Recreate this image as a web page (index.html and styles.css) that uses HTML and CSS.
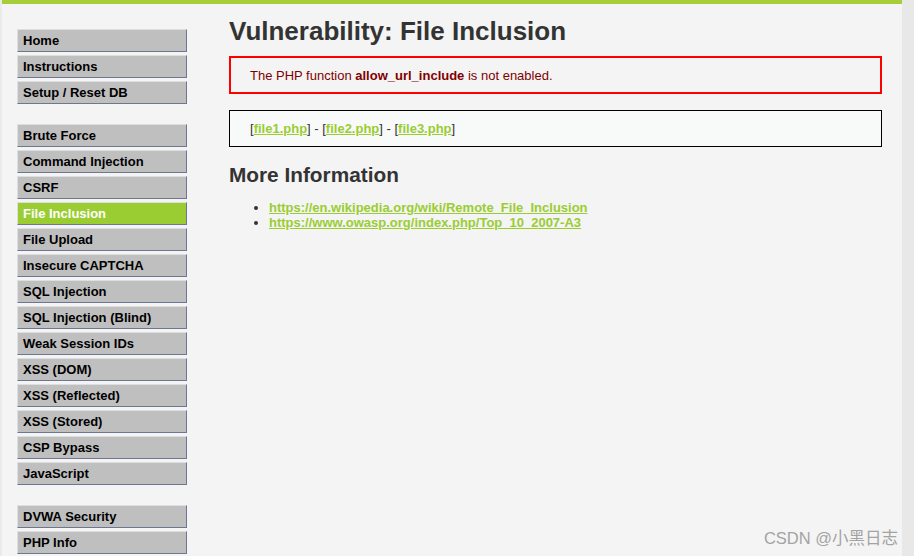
FILE: index.html
```html
<!DOCTYPE html>
<html lang="en">
<head>
<meta charset="utf-8">
<title>Vulnerability: File Inclusion</title>
<link rel="stylesheet" href="styles.css">
</head>
<body>
<div class="page">
  <div class="topbar"></div>
  <div class="layout">
    <nav class="menu">
      <ul class="group">
        <li><a href="#">Home</a></li>
        <li><a href="#">Instructions</a></li>
        <li><a href="#">Setup / Reset DB</a></li>
      </ul>
      <ul class="group">
        <li><a href="#">Brute Force</a></li>
        <li><a href="#">Command Injection</a></li>
        <li><a href="#">CSRF</a></li>
        <li><a href="#" class="selected">File Inclusion</a></li>
        <li><a href="#">File Upload</a></li>
        <li><a href="#">Insecure CAPTCHA</a></li>
        <li><a href="#">SQL Injection</a></li>
        <li><a href="#">SQL Injection (Blind)</a></li>
        <li><a href="#">Weak Session IDs</a></li>
        <li><a href="#">XSS (DOM)</a></li>
        <li><a href="#">XSS (Reflected)</a></li>
        <li><a href="#">XSS (Stored)</a></li>
        <li><a href="#">CSP Bypass</a></li>
        <li><a href="#">JavaScript</a></li>
      </ul>
      <ul class="group">
        <li><a href="#">DVWA Security</a></li>
        <li><a href="#">PHP Info</a></li>
      </ul>
    </nav>
    <main class="body">
      <h1 class="title">Vulnerability: File Inclusion</h1>
      <div class="warning">The PHP function <b>allow_url_include</b> is not enabled.</div>
      <div class="code-area">[<a href="#">file1.php</a>] - [<a href="#">file2.php</a>] - [<a href="#">file3.php</a>]</div>
      <h2 class="subtitle">More Information</h2>
      <ul class="links">
        <li><a href="#">https://en.wikipedia.org/wiki/Remote_File_Inclusion</a></li>
        <li><a href="#">https://www.owasp.org/index.php/Top_10_2007-A3</a></li>
      </ul>
    </main>
  </div>
</div>
<div class="watermark">CSDN @小黑日志</div>
</body>
</html>
```
FILE: styles.css
```css
html, body {
  margin: 0;
  padding: 0;
  height: 100%;
}
body {
  background: #e8e8e8;
  font-family: "Liberation Sans", Arial, sans-serif;
  font-size: 13px;
  color: #333;
  overflow: hidden;
}
.page {
  width: 902px;
  height: 556px;
  background: #f4f4f4;
  border-left: 2px solid #ebebeb;
  box-sizing: border-box;
}
.topbar {
  height: 4px;
  background: #a6ce39;
}
.layout {
  display: flex;
  align-items: flex-start;
}
.menu {
  width: 170px;
  margin-left: 15px;
  padding-top: 25px;
}
.group {
  list-style: none;
  margin: 0 0 20px 0;
  padding: 0;
}
.group li {
  margin-bottom: 3px;
}
.group li:last-child {
  margin-bottom: 0;
}
.group a {
  display: block;
  height: 21px;
  line-height: 21px;
  padding-left: 5px;
  background: #bfbfbf;
  border: 1px solid;
  border-color: #dedede #6d7791 #6d7791 #dedede;
  color: #000;
  font-weight: bold;
  font-size: 13px;
  text-decoration: none;
}
.group a.selected {
  background: #9acd32;
  color: #fff;
}
.body {
  margin-left: 42px;
  width: 653px;
}
.title {
  margin: 12px 0 0 0;
  font-size: 26px;
  line-height: 30px;
  font-weight: bold;
  color: #333;
}
.warning {
  margin-top: 10px;
  border: 2px solid #ff0000;
  padding: 10px 19px 9px 19px;
  line-height: 15px;
  color: #800000;
}
.warning b {
  font-weight: bold;
}
.code-area {
  margin-top: 16px;
  border: 1px solid #000;
  background: #f8f9f9;
  padding: 10px 20px 10px 20px;
  line-height: 15px;
  color: #333;
}
a {
  color: #9acd32;
  font-weight: bold;
  text-decoration: underline;
}
.subtitle {
  margin: 16px 0 0 0;
  font-size: 20.8px;
  line-height: 24px;
  font-weight: bold;
  color: #333;
}
.links {
  margin: 13px 0 0 0;
  padding-left: 40px;
  line-height: 15px;
}
.watermark {
  position: absolute;
  right: 16px;
  bottom: 7px;
  font-family: "Liberation Sans", "Noto Sans CJK SC", sans-serif;
  font-size: 16.5px;
  color: #a3a3a3;
}
```
